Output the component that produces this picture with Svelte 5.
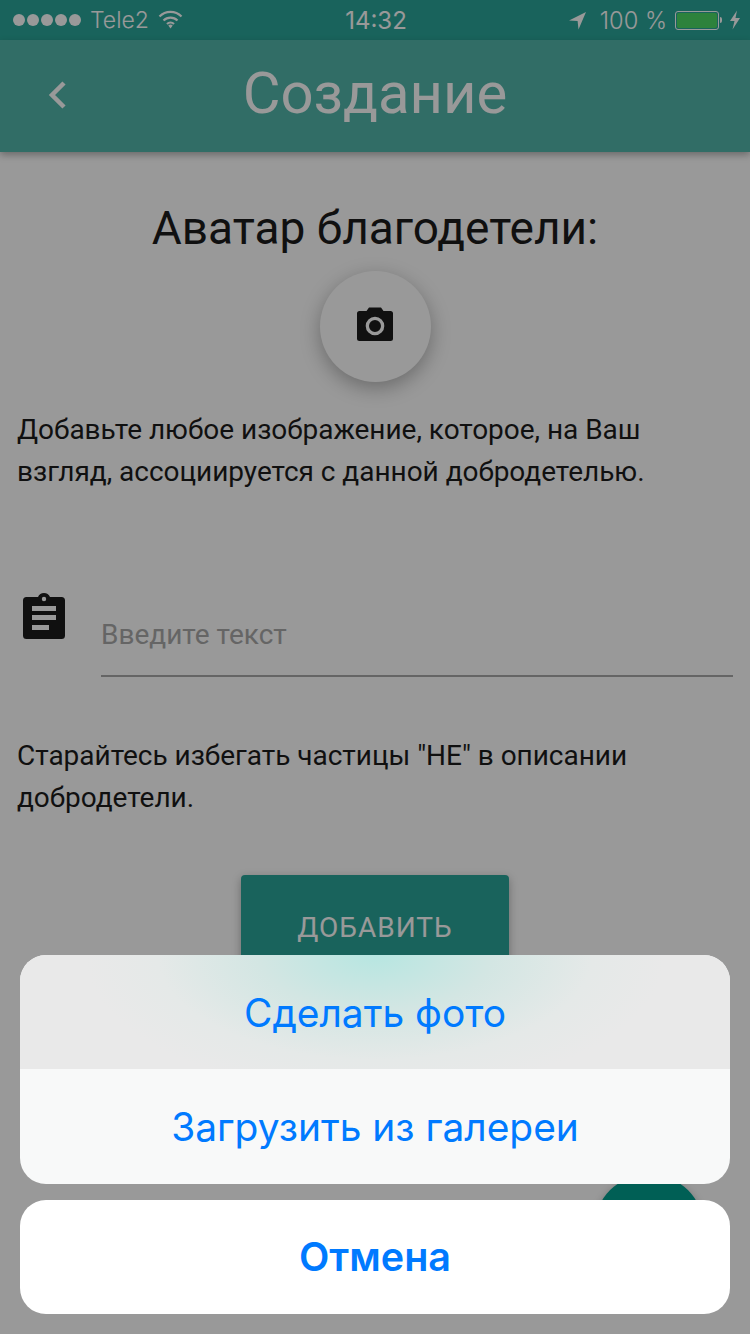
<script>
	const actions = ['Сделать фото', 'Загрузить из галереи']
</script>

<div class="screen">
	<div class="status">
		<div class="status-left">
			<span class="dots"><i></i><i></i><i></i><i></i><i></i></span>
			<span>Tele2</span>
			<svg width="25" height="20" viewBox="0 0 25 20" class="wifi">
				<path d="M1.5 6.5 A15.5 15.5 0 0 1 23.5 6.5" />
				<path d="M5.5 10.5 A10 10 0 0 1 19.5 10.5" />
				<path d="M9 14 A5 5 0 0 1 16 14" />
				<path class="solid" d="M10.3 15.5 A3.3 3.3 0 0 1 14.7 15.5 L12.5 18.6 Z" />
			</svg>
		</div>
		<span class="time">14:32</span>
		<div class="status-right">
			<svg width="19" height="19" viewBox="0 0 19 19"><path class="solid" d="M18 1 L1 9.5 L9.6 10 L10.5 18.5 Z" /></svg>
			<span class="percent">100 %</span>
			<span class="battery"><b></b></span>
			<span class="nub"></span>
			<svg width="12" height="20" viewBox="0 0 12 20"><path class="solid" d="M8 0.5 L1 11 L5.5 11 L3.5 19.5 L11 8 L6.5 8 Z" /></svg>
		</div>
	</div>

	<header>
		<svg class="back" width="20" height="30" viewBox="0 0 20 30"><path d="M17 3 L5 15 L17 27" /></svg>
		<h1>Создание</h1>
	</header>

	<main>
		<h2>Аватар благодетели:</h2>
		<button class="camera" aria-label="Камера">
			<svg width="36" height="34" viewBox="0 0 36 34">
				<path fill="#1c1c1c" fill-rule="evenodd" d="M12 0.5 H24 L26.5 4 H33.5 Q36 4 36 6.5 V31.5 Q36 34 33.5 34 H2.5 Q0 34 0 31.5 V6.5 Q0 4 2.5 4 H9.5 Z M18 9.7 A9.3 9.3 0 1 0 18 28.3 A9.3 9.3 0 1 0 18 9.7 Z M18 13 A6 6 0 1 1 18 25 A6 6 0 1 1 18 13 Z" />
			</svg>
		</button>
		<p class="hint first">Добавьте любое изображение, которое, на Ваш взгляд, ассоциируется с данной добродетелью.</p>

		<div class="field">
			<svg width="42" height="47" viewBox="0 0 42 47">
				<path fill="#1c1c1c" fill-rule="evenodd" d="M3.5 5 H15 A6.5 6.5 0 0 1 27 5 H38.5 Q42 5 42 8.5 V43.5 Q42 47 38.5 47 H3.5 Q0 47 0 43.5 V8.5 Q0 5 3.5 5 Z M21 4.8 A2.2 2.2 0 1 0 21 9.2 A2.2 2.2 0 1 0 21 4.8 Z M9 14 V19 H33 V14 Z M9 23 V28 H33 V23 Z M9 33 V38 H26 V33 Z" />
			</svg>
			<div class="input">Введите текст</div>
		</div>

		<p class="hint second">Старайтесь избегать частицы "НЕ" в описании добродетели.</p>

		<button class="add">ДОБАВИТЬ</button>
	</main>

	<div class="fab"></div>
	<div class="overlay"></div>

	<div class="sheet">
		<div class="group">
			{#each actions as action, i}
				<div class="action" class:pressed={i === 0}>{action}</div>
			{/each}
		</div>
		<div class="action cancel">Отмена</div>
	</div>
</div>

<style>
	:global(body) {
		margin: 0;
	}
	.screen {
		position: relative;
		width: 750px;
		height: 1334px;
		overflow: hidden;
		background: #fff;
		font-family: Roboto, sans-serif;
		color: #1c1c1c;
	}
	.status {
		height: 40px;
		background: #2aa699;
		color: #fff;
		display: grid;
		grid-template-columns: 1fr auto 1fr;
		align-items: center;
		padding: 0 9px 0 13px;
		box-sizing: border-box;
		font-family: Inter, Roboto, sans-serif;
		font-size: 23px;
		font-weight: 300;
	}
	.status-left, .status-right {
		display: flex;
		align-items: center;
	}
	.status-left {
		gap: 9px;
	}
	.status-right {
		justify-content: flex-end;
	}
	.percent {
		margin: 0 8px 0 13px;
		font-size: 23.6px;
	}
	.dots {
		display: flex;
		gap: 2px;
	}
	.dots i {
		width: 12px;
		height: 12px;
		border-radius: 50%;
		background: #fff;
	}
	.time {
		font-weight: 400;
		font-size: 24px;
		margin-left: -2px;
	}
	.wifi path {
		fill: none;
		stroke: #fff;
		stroke-width: 2.2;
	}
	.wifi path.solid, .solid {
		fill: #fff;
		stroke: none;
	}
	.battery {
		width: 40px;
		height: 15px;
		border: 1px solid #fff;
		border-radius: 3px;
		padding: 1px;
		display: flex;
		box-sizing: content-box;
	}
	.battery b {
		flex: 1;
		background: #4cd964;
		border-radius: 2px;
	}
	.nub {
		width: 2px;
		height: 6px;
		background: #fff;
		margin: 0 7px 0 1px;
		border-radius: 0 2px 2px 0;
	}
	header {
		position: relative;
		height: 112px;
		background: #52b6aa;
		box-shadow: 0 3px 7px rgba(0, 0, 0, 0.3);
		display: flex;
		align-items: center;
		justify-content: center;
	}
	.back {
		position: absolute;
		left: 47px;
		top: 40px;
	}
	.back path {
		fill: none;
		stroke: #fff;
		stroke-width: 4.5;
	}
	h1 {
		margin: 0 0 6px;
		font-size: 58px;
		font-weight: 400;
		color: #fff;
	}
	main {
		padding: 0 17px;
		display: flex;
		flex-direction: column;
	}
	h2 {
		margin: 49px 0 0;
		text-align: center;
		font-size: 46px;
		line-height: 54px;
		font-weight: 400;
	}
	.camera {
		width: 111px;
		height: 111px;
		margin: 16px auto 0;
		padding: 0 0 6px;
		border: 0;
		border-radius: 50%;
		background: #fff;
		box-shadow: 0 6px 20px rgba(0, 0, 0, 0.3);
		display: flex;
		align-items: center;
		justify-content: center;
	}
	.hint {
		margin: 0;
		font-size: 28px;
		line-height: 42px;
		letter-spacing: -0.03px;
	}
	.hint.first {
		margin-top: 27px;
	}
	.hint.second {
		margin-top: 58px;
	}
	.field {
		display: flex;
		align-items: flex-start;
		margin-top: 99px;
		padding-left: 6px;
		gap: 36px;
	}
	.input {
		flex: 1;
		margin-top: 3px;
		box-sizing: border-box;
		border-bottom: 2px solid #a8a8a8;
		font-size: 28px;
		line-height: 80px;
		color: #a8a8a8;
		height: 82px;
	}
	.add {
		width: 268px;
		height: 104px;
		margin: 56px auto 0;
		padding: 0;
		border: 0;
		border-radius: 4px;
		background: #2aa699;
		color: #fff;
		font-family: Roboto, sans-serif;
		font-size: 28px;
		letter-spacing: 1px;
		box-shadow: 0 3px 10px rgba(0, 0, 0, 0.3);
	}
	.fab {
		position: absolute;
		left: 594px;
		top: 1174px;
		width: 110px;
		height: 110px;
		border-radius: 50%;
		background: #009e8e;
		box-shadow: 0 3px 8px rgba(0, 0, 0, 0.3);
	}
	.overlay {
		position: absolute;
		inset: 0;
		background: rgba(0, 0, 0, 0.4);
	}
	.sheet {
		position: absolute;
		left: 20px;
		right: 20px;
		bottom: 20px;
		display: flex;
		flex-direction: column;
		gap: 16px;
		font-family: Inter, Roboto, sans-serif;
		color: #007aff;
	}
	.group {
		border-radius: 26px;
		overflow: hidden;
		background: #f8f9f9;
	}
	.action {
		height: 115px;
		display: flex;
		align-items: center;
		justify-content: center;
		font-size: 38.9px;
	}
	.pressed {
		height: 114px;
		background: radial-gradient(ellipse 290px 140px at 50% 0, #b7e6e1 0%, #d3e6e3 40%, #e5e9e8 75%, #e9e9e9 100%);
	}
	.cancel {
		height: 114px;
		background: #fff;
		border-radius: 26px;
		font-size: 39.5px;
		font-weight: 600;
	}
</style>
